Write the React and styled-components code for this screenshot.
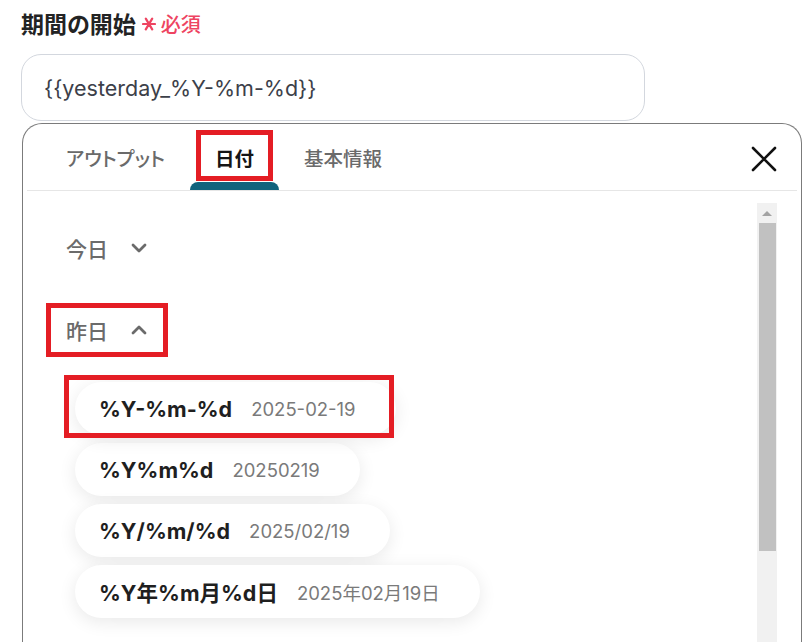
import React from "react";
import styled, { createGlobalStyle, css } from "styled-components";

const GlobalStyle = createGlobalStyle`
  html, body {
    margin: 0;
    padding: 0;
    background: #fff;
    overflow: hidden;
  }
  body {
    font-family: "Inter", "Noto Sans CJK JP", sans-serif;
    color: #222;
  }
`;

const marked = css`
  position: relative;
  &::after {
    content: "";
    position: absolute;
    border: 5px solid #e41d24;
    pointer-events: none;
  }
`;

const Page = styled.div`
  width: 812px;
  height: 642px;
  padding: 8px 0 0 21px;
  box-sizing: border-box;
  overflow: hidden;
`;

const Label = styled.div`
  display: flex;
  align-items: center;
  height: 30px;
  font-size: 23px;
  font-weight: 700;
  color: #232323;
  font-feature-settings: "palt";
`;

const Required = styled.span`
  display: inline-flex;
  align-items: center;
  gap: 5px;
  margin-left: 6px;
  font-size: 20px;
  font-weight: 500;
  color: #ee4461;

  svg {
    transform: translateY(1px);
  }
`;

const Input = styled.div`
  margin-top: 16px;
  width: 624px;
  height: 67px;
  box-sizing: border-box;
  border: 1px solid #d3d7de;
  border-radius: 20px;
  padding: 0 22px;
  display: flex;
  align-items: center;
  font-size: 21.5px;
  color: #3c4049;
`;

const Panel = styled.div`
  margin-top: 2px;
  margin-left: 1px;
  width: 780px;
  height: 560px;
  box-sizing: border-box;
  border: 1px solid #7b7b7b;
  border-bottom: none;
  border-radius: 20px 20px 0 0;
  display: flex;
  flex-direction: column;
`;

const TabBar = styled.div`
  display: flex;
  align-items: stretch;
  height: 66px;
  padding-left: 14px;
  margin: 0 4px;
  border-bottom: 1px solid #e6e6e6;
`;

const Tab = styled.div`
  display: flex;
  align-items: center;
  padding: 0 25px 0;
  font-size: 19.5px;
  font-weight: ${(p) => (p.active ? 700 : 500)};
  color: ${(p) => (p.active ? "#151515" : "#6a6a6a")};
  font-feature-settings: "palt";
  ${(p) =>
    p.active &&
    css`
      &::before {
        content: "";
        position: absolute;
        left: 0;
        right: 0;
        bottom: 0;
        height: 8px;
        border-radius: 8px 8px 0 0;
        background: #12637d;
      }
    `}
  ${(p) => (p.active || p.marked) && marked}
  ${(p) =>
    p.marked &&
    css`
      &::after {
        left: 6px;
        right: 6px;
        top: 6px;
        bottom: 9px;
      }
    `}
`;

const Close = styled.button`
  margin-left: auto;
  margin-right: 18px;
  align-self: center;
  background: none;
  border: 0;
  padding: 0;
  width: 30px;
  height: 30px;
  display: flex;
  align-items: center;
  justify-content: center;
  transform: translateY(2px);
`;

const Body = styled.div`
  flex: 1;
  display: flex;
  min-height: 0;
`;

const Content = styled.div`
  flex: 1;
  padding: 30px 0 0 23px;
  display: flex;
  flex-direction: column;
  align-items: flex-start;
`;

const SectionHead = styled.div`
  display: inline-flex;
  align-items: center;
  gap: 22px;
  height: 54px;
  padding: 0 20px;
  box-sizing: border-box;
  margin-bottom: ${(p) => p.space || 0}px;
  font-size: 21px;
  font-weight: 500;
  color: #6b6b6b;
  ${(p) => p.marked && marked}
  ${(p) =>
    p.marked &&
    css`
      &::after {
        inset: 0;
      }
    `}
`;

const Items = styled.div`
  margin-top: 25px;
  padding-left: 29px;
  display: flex;
  flex-direction: column;
  align-items: flex-start;
  gap: 8px;
`;

const Pill = styled.div`
  display: inline-flex;
  align-items: center;
  gap: 19px;
  height: 53px;
  padding: 0 40px 0 24px;
  box-sizing: border-box;
  border-radius: 27px;
  background: #fff;
  box-shadow: 0 4px 18px rgba(0, 0, 0, 0.09);
  ${(p) => p.marked && marked}
  ${(p) =>
    p.marked &&
    css`
      &::after {
        top: -7px;
        bottom: -3px;
        left: -11px;
        right: 2px;
      }
    `}
`;

const Code = styled.span`
  font-size: 21.5px;
  font-weight: 700;
  color: #1f1f1f;
`;

const Sample = styled.span`
  font-size: 18.5px;
  color: #7a7a7a;
`;

const Scroll = styled.div`
  width: 20px;
  margin: 12px 24px 0 0;
  background: #f1f1f1;
  display: flex;
  flex-direction: column;
  align-items: center;
`;

const ScrollArrow = styled.div`
  height: 20px;
  display: flex;
  align-items: center;
  justify-content: center;

  &::before {
    content: "";
    border-left: 5px solid transparent;
    border-right: 5px solid transparent;
    border-bottom: 5px solid #a3a3a3;
  }
`;

const ScrollThumb = styled.div`
  width: 17px;
  height: 328px;
  background: #c1c1c1;
`;

const Chevron = ({ up }) => (
  <svg width="18" height="18" viewBox="0 0 18 18">
    <path
      d={up ? "M3 12 L9 6 L15 12" : "M3 6 L9 12 L15 6"}
      fill="none"
      stroke="#6b6b6b"
      strokeWidth="2.8"
      strokeLinecap="round"
      strokeLinejoin="round"
    />
  </svg>
);

const Asterisk = () => (
  <svg width="14" height="14" viewBox="0 0 14 14">
    <path
      d="M1 7 H13 M3.8 1.6 L10.2 12.4 M10.2 1.6 L3.8 12.4"
      stroke="#ee4461"
      strokeWidth="2.2"
      strokeLinecap="round"
    />
  </svg>
);

const formats = [
  { code: "%Y-%m-%d", sample: "2025-02-19", marked: true },
  { code: "%Y%m%d", sample: "20250219" },
  { code: "%Y/%m/%d", sample: "2025/02/19" },
  { code: "%Y年%m月%d日", sample: "2025年02月19日" },
];

export default function App() {
  return (
    <>
      <GlobalStyle />
      <Page>
        <Label>
          期間の開始
          <Required>
            <Asterisk />
            必須
          </Required>
        </Label>
        <Input>{"{{yesterday_%Y-%m-%d}}"}</Input>
        <Panel>
          <TabBar>
            <Tab>アウトプット</Tab>
            <Tab active marked>
              日付
            </Tab>
            <Tab>基本情報</Tab>
            <Close aria-label="close">
              <svg width="26" height="26" viewBox="0 0 26 26">
                <path
                  d="M2 2 L24 24 M24 2 L2 24"
                  stroke="#111"
                  strokeWidth="2.6"
                  strokeLinecap="round"
                />
              </svg>
            </Close>
          </TabBar>
          <Body>
            <Content>
              <SectionHead space={28}>
                今日
                <Chevron />
              </SectionHead>
              <SectionHead marked>
                昨日
                <Chevron up />
              </SectionHead>
              <Items>
                {formats.map((f) => (
                  <Pill key={f.code} marked={f.marked}>
                    <Code>{f.code}</Code>
                    <Sample>{f.sample}</Sample>
                  </Pill>
                ))}
              </Items>
            </Content>
            <Scroll>
              <ScrollArrow />
              <ScrollThumb />
            </Scroll>
          </Body>
        </Panel>
      </Page>
    </>
  );
}
